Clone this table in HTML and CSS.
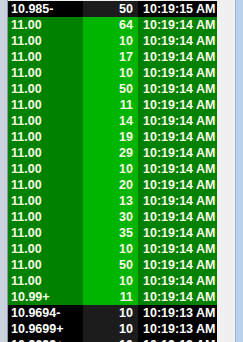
FILE: index.html
```html
<!DOCTYPE html>
<html>
<head>
<meta charset="utf-8">
<link rel="stylesheet" href="styles.css">
</head>
<body>
<div class="frame">
  <div class="edge-left"></div>
  <div class="grid">
    <div class="row dark"><span class="c1">10.985-</span><span class="c2">50</span><span class="c3">10:19:15 AM</span></div>
    <div class="row green"><span class="c1">11.00</span><span class="c2">64</span><span class="c3">10:19:14 AM</span></div>
    <div class="row green"><span class="c1">11.00</span><span class="c2">10</span><span class="c3">10:19:14 AM</span></div>
    <div class="row green"><span class="c1">11.00</span><span class="c2">17</span><span class="c3">10:19:14 AM</span></div>
    <div class="row green"><span class="c1">11.00</span><span class="c2">10</span><span class="c3">10:19:14 AM</span></div>
    <div class="row green"><span class="c1">11.00</span><span class="c2">50</span><span class="c3">10:19:14 AM</span></div>
    <div class="row green"><span class="c1">11.00</span><span class="c2">11</span><span class="c3">10:19:14 AM</span></div>
    <div class="row green"><span class="c1">11.00</span><span class="c2">14</span><span class="c3">10:19:14 AM</span></div>
    <div class="row green"><span class="c1">11.00</span><span class="c2">19</span><span class="c3">10:19:14 AM</span></div>
    <div class="row green"><span class="c1">11.00</span><span class="c2">29</span><span class="c3">10:19:14 AM</span></div>
    <div class="row green"><span class="c1">11.00</span><span class="c2">10</span><span class="c3">10:19:14 AM</span></div>
    <div class="row green"><span class="c1">11.00</span><span class="c2">20</span><span class="c3">10:19:14 AM</span></div>
    <div class="row green"><span class="c1">11.00</span><span class="c2">13</span><span class="c3">10:19:14 AM</span></div>
    <div class="row green"><span class="c1">11.00</span><span class="c2">30</span><span class="c3">10:19:14 AM</span></div>
    <div class="row green"><span class="c1">11.00</span><span class="c2">35</span><span class="c3">10:19:14 AM</span></div>
    <div class="row green"><span class="c1">11.00</span><span class="c2">10</span><span class="c3">10:19:14 AM</span></div>
    <div class="row green"><span class="c1">11.00</span><span class="c2">50</span><span class="c3">10:19:14 AM</span></div>
    <div class="row green"><span class="c1">11.00</span><span class="c2">10</span><span class="c3">10:19:14 AM</span></div>
    <div class="row green"><span class="c1">10.99+</span><span class="c2">11</span><span class="c3">10:19:14 AM</span></div>
    <div class="row dark"><span class="c1">10.9694-</span><span class="c2">10</span><span class="c3">10:19:13 AM</span></div>
    <div class="row dark"><span class="c1">10.9699+</span><span class="c2">10</span><span class="c3">10:19:13 AM</span></div>
    <div class="row dark"><span class="c1">10.9699+</span><span class="c2">10</span><span class="c3">10:19:13 AM</span></div>
  </div>
  <div class="blank"></div>
  <div class="edge-right"></div>
</div>
</body>
</html>
```

FILE: styles.css
```css
html, body {
  margin: 0;
  padding: 0;
  background: #f0f0f0;
  overflow: hidden;
}
.frame {
  display: flex;
  width: 243px;
  height: 342px;
  overflow: hidden;
}
.edge-left {
  width: 7px;
  flex: none;
  background: #c8d3dd;
  border-right: 1px solid #8d9aa6;
}
.grid {
  width: 209px;
  flex: none;
  display: flex;
  flex-direction: column;
  margin-top: 1px;
  font-family: "Liberation Sans", Arial, sans-serif;
  font-weight: bold;
  font-size: 12.5px;
  line-height: 16px;
}
.row {
  display: flex;
  height: 16px;
  flex: none;
}
.row span {
  display: block;
  white-space: nowrap;
  overflow: hidden;
}
.c1 {
  width: 72px;
  padding-left: 3px;
}
.c2 {
  width: 50px;
  padding-right: 5px;
  text-align: right;
}
.c3 {
  width: 74px;
  padding-left: 5px;
}
.green .c1, .green .c3 {
  background: #008200;
  color: #fcfce8;
}
.green .c2 {
  background: #00b400;
  color: #fcfce8;
}
.dark .c1, .dark .c3 {
  background: #000000;
  color: #ffffff;
}
.dark .c2 {
  background: #1c1c1c;
  color: #ffffff;
}
.blank {
  width: 18px;
  flex: none;
  background: #f0f0f0;
}
.edge-right {
  flex: 1;
  background: #b9d1ea;
  border-left: 1px solid #9fb6cf;
}
```
